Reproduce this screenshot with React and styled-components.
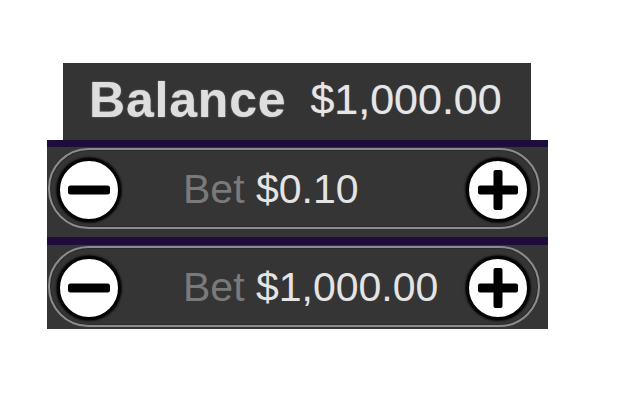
import React from 'react';
import styled, { createGlobalStyle } from 'styled-components';

const GlobalStyle = createGlobalStyle`
  html, body {
    margin: 0;
    padding: 0;
    background: #ffffff;
  }
  body {
    font-family: "Liberation Sans", Arial, sans-serif;
  }
`;

const Panel = styled.div`
  width: 501px;
  padding: 63px 0 0 47px;
  display: flex;
  flex-direction: column;
`;

const BalanceBox = styled.div`
  margin-left: 16px;
  width: 468px;
  height: 77px;
  box-sizing: border-box;
  padding: 0 0 4px 26px;
  background: #343434;
  display: flex;
  align-items: center;
  gap: 24px;
  line-height: 1;
`;

const BalanceLabel = styled.span`
  font-size: 50px;
  font-weight: 700;
  letter-spacing: 0.8px;
  color: #dedede;
  text-shadow: 0 0 1.5px rgba(222, 222, 222, 0.6);
`;

const BalanceValue = styled.span`
  font-size: 43px;
  color: #e6e6e6;
  text-shadow: 0 0 1px rgba(230, 230, 230, 0.5);
`;

const BetRow = styled.div`
  width: 501px;
  box-sizing: border-box;
  background: #353535;
  border-top: ${p => p.$band}px solid #1e0c3d;
  padding: 1px 8px ${p => p.$bottom}px 1px;
`;

const Pill = styled.div`
  height: 81px;
  box-sizing: border-box;
  border: 2px solid #8c8c8c;
  border-radius: 41px;
  box-shadow: inset 0 0 0 1px #2a2a2a;
  display: flex;
  align-items: center;
  padding: 2px 8px 0 7px;
`;

const RoundButton = styled.button`
  width: 64px;
  height: 64px;
  flex: none;
  padding: 0;
  border-radius: 50%;
  border: 3px solid #050505;
  background: #ffffff;
  box-shadow: 0 0 2px 1px rgba(0, 0, 0, 0.8);
  display: flex;
  align-items: center;
  justify-content: center;
  cursor: pointer;
`;

const BetText = styled.div`
  flex: 1;
  margin-left: 62px;
  font-size: 41px;
  line-height: 1;
  white-space: nowrap;
`;

const BetLabel = styled.span`
  color: #7a7a7a;
`;

const BetValue = styled.span`
  color: #e4e4e4;
`;

const MinusIcon = () => (
  <svg width="44" height="44" viewBox="0 0 44 44">
    <rect x="1" y="17.5" width="42" height="9" rx="2.5" fill="#000" />
  </svg>
);

const PlusIcon = () => (
  <svg width="44" height="44" viewBox="0 0 44 44">
    <rect x="2" y="17.5" width="40" height="9" rx="2" fill="#000" />
    <rect x="17.5" y="2" width="9" height="40" rx="2" fill="#000" />
  </svg>
);

const BetControl = ({ amount, band, bottom }) => (
  <BetRow $band={band} $bottom={bottom}>
    <Pill>
      <RoundButton aria-label="decrease bet">
        <MinusIcon />
      </RoundButton>
      <BetText>
        <BetLabel>Bet</BetLabel> <BetValue>{amount}</BetValue>
      </BetText>
      <RoundButton aria-label="increase bet">
        <PlusIcon />
      </RoundButton>
    </Pill>
  </BetRow>
);

export default function App() {
  return (
    <>
      <GlobalStyle />
      <Panel>
        <BalanceBox>
          <BalanceLabel>Balance</BalanceLabel>
          <BalanceValue>$1,000.00</BalanceValue>
        </BalanceBox>
        <BetControl amount="$0.10" band={7} bottom={8} />
        <BetControl amount="$1,000.00" band={8} bottom={2} />
      </Panel>
    </>
  );
}
